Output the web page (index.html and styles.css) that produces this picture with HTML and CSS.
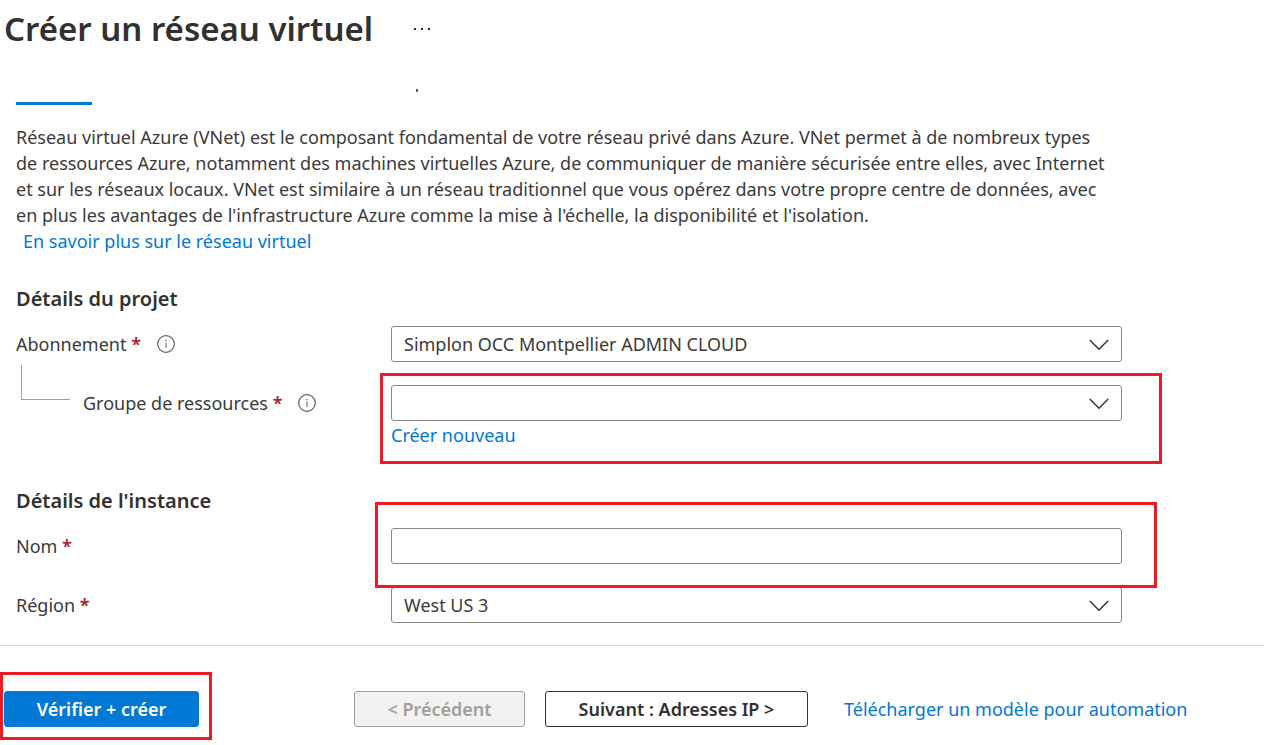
FILE: index.html
```html
<!DOCTYPE html>
<html lang="fr">
<head>
<meta charset="utf-8">
<meta name="viewport" content="width=device-width, initial-scale=1">
<title>Créer un réseau virtuel</title>
<link rel="stylesheet" href="styles.css">
</head>
<body>
<header class="header">
  <h1 class="title">Créer un réseau virtuel</h1>
  <button class="more" type="button" aria-label="Plus d'options">
    <svg width="18" height="4" viewBox="0 0 18 4" aria-hidden="true"><path d="M1 1h2v2H1zM8 1h2v2H8zM15 1h2v2h-2z" fill="#323130"/></svg>
  </button>
</header>
<div class="tabs">
  <span class="tab-active"></span>
  <span class="tab-mark"></span>
</div>
<main class="content">
  <p class="intro">Réseau virtuel Azure (VNet) est le composant fondamental de votre réseau privé dans Azure. VNet permet à de nombreux types de ressources Azure, notamment des machines virtuelles Azure, de communiquer de manière sécurisée entre elles, avec Internet et sur les réseaux locaux. VNet est similaire à un réseau traditionnel que vous opérez dans votre propre centre de données, avec en plus les avantages de l'infrastructure Azure comme la mise à l'échelle, la disponibilité et l'isolation.</p>
  <a class="link learn" href="#">En savoir plus sur le réseau virtuel</a>

  <section class="section">
    <h2 class="heading">Détails du projet</h2>
    <div class="row">
      <div class="label-cell">
        <label for="subscription">Abonnement <span class="required">*</span></label>
        <svg class="info" width="18" height="18" viewBox="0 0 18 18" aria-hidden="true"><circle cx="9" cy="9" r="8.3" fill="none" stroke="#605e5c" stroke-width="1.2"/><path d="M8.4 5h1.2v1.3H8.4zM8.5 7.6h1v5.4h-1z" fill="#605e5c"/></svg>
      </div>
      <div class="field">
        <select id="subscription" class="control"><option>Simplon OCC Montpellier ADMIN CLOUD</option></select>
        <svg class="chevron" width="20" height="12" viewBox="0 0 20 12" aria-hidden="true"><path d="M.8 1 10 10.3 19.2 1" fill="none" stroke="#323130" stroke-width="1.4"/></svg>
      </div>
    </div>
    <div class="row">
      <div class="label-cell">
        <span class="branch"></span>
        <label for="group">Groupe de ressources <span class="required">*</span></label>
        <svg class="info" width="18" height="18" viewBox="0 0 18 18" aria-hidden="true"><circle cx="9" cy="9" r="8.3" fill="none" stroke="#605e5c" stroke-width="1.2"/><path d="M8.4 5h1.2v1.3H8.4zM8.5 7.6h1v5.4h-1z" fill="#605e5c"/></svg>
      </div>
      <div class="field">
        <select id="group" class="control"><option></option></select>
        <svg class="chevron" width="20" height="12" viewBox="0 0 20 12" aria-hidden="true"><path d="M.8 1 10 10.3 19.2 1" fill="none" stroke="#323130" stroke-width="1.4"/></svg>
        <a class="link create" href="#">Créer nouveau</a>
        <span class="highlight highlight-group"></span>
      </div>
    </div>
  </section>

  <section class="section section-instance">
    <h2 class="heading">Détails de l'instance</h2>
    <div class="row">
      <div class="label-cell">
        <label for="name">Nom <span class="required">*</span></label>
      </div>
      <div class="field">
        <input id="name" class="control" type="text">
        <span class="highlight highlight-name"></span>
      </div>
    </div>
    <div class="row">
      <div class="label-cell">
        <label for="region">Région <span class="required">*</span></label>
      </div>
      <div class="field">
        <select id="region" class="control"><option>West US 3</option></select>
        <svg class="chevron" width="20" height="12" viewBox="0 0 20 12" aria-hidden="true"><path d="M.8 1 10 10.3 19.2 1" fill="none" stroke="#323130" stroke-width="1.4"/></svg>
      </div>
    </div>
  </section>
</main>
<footer class="footer">
  <div class="primary-slot">
    <button class="button primary" type="button">Vérifier + créer</button>
    <span class="highlight highlight-submit"></span>
  </div>
  <button class="button previous" type="button" disabled>&lt; Précédent</button>
  <button class="button next" type="button">Suivant : Adresses IP &gt;</button>
  <a class="link download" href="#">Télécharger un modèle pour automation</a>
</footer>
</body>
</html>
```
FILE: styles.css
```css
* { box-sizing: border-box; }

body {
  margin: 0;
  background: #fff;
  color: #3b3a39;
  font-family: "Segoe UI", "Noto Sans", "Open Sans", sans-serif;
  font-size: 18px;
  line-height: 26px;
}

.header {
  display: flex;
  align-items: center;
  gap: 40px;
  height: 58px;
  padding-left: 4px;
}

.title {
  margin: 0;
  color: #323130;
  font-size: 33px;
  font-weight: 600;
  line-height: 48px;
}

.more {
  display: flex;
  padding: 0;
  border: 0;
  background: none;
}

.tabs {
  display: flex;
  align-items: flex-end;
  gap: 324px;
  height: 47px;
  padding-left: 16px;
}

.tab-active {
  width: 76px;
  height: 3px;
  background: #0078d4;
}

.tab-mark {
  width: 2px;
  height: 3px;
  margin-bottom: 13px;
  background: #605e5c;
}

.content {
  max-width: 1138px;
  padding: 19px 16px 0;
}

.intro {
  max-width: 1099px;
  margin: 0;
}

.link {
  color: #0078d4;
  text-decoration: none;
}

.learn { margin-left: 7px; }

.section { padding-top: 32px; }

.section-instance { padding-top: 40px; }

.heading {
  margin: 0 0 14px;
  color: #323130;
  font-size: 20px;
  font-weight: 600;
  line-height: 26px;
}

.row {
  display: grid;
  grid-template-columns: 375px 1fr;
  margin-bottom: 23px;
}

.row:last-child { margin-bottom: 0; }

.label-cell {
  display: flex;
  align-items: center;
  height: 36px;
}

.required {
  color: #a4262c;
  font-weight: 600;
}

.info { margin-left: 16px; }

.branch {
  width: 49px;
  height: 35px;
  margin: 0 13px 42px 5px;
  border: solid #a19f9d;
  border-width: 0 0 1px 1px;
}

.field { position: relative; }

.control {
  display: block;
  width: 100%;
  height: 36px;
  padding: 0 12px;
  border: 1px solid #8a8886;
  border-radius: 3px;
  background: #fff;
  color: inherit;
  font: inherit;
  appearance: none;
}

.chevron {
  position: absolute;
  top: 13px;
  right: 13px;
  pointer-events: none;
}

.create {
  display: block;
  width: max-content;
  padding-top: 1px;
}

.highlight {
  position: absolute;
  z-index: 1;
  border: 3px solid #ed1c24;
  pointer-events: none;
}

.highlight-group { inset: -12px -40px -16px -11px; }

.highlight-name { inset: -26px -35px -24px -16px; }

.highlight-submit { inset: -19px -13px -13px -4px; }

.footer {
  display: flex;
  align-items: center;
  margin-top: 22px;
  padding: 45px 4px 18px;
  border-top: 1px solid #d8d6d4;
}

.primary-slot {
  position: relative;
  margin-right: 155px;
}

.button {
  display: block;
  height: 36px;
  padding: 0;
  border: 1px solid #323130;
  border-radius: 3px;
  background: #fff;
  color: #323130;
  font: inherit;
  font-weight: 600;
}

.primary {
  width: 195px;
  border-color: #0078d4;
  background: #0078d4;
  color: #fff;
}

.previous {
  width: 171px;
  margin-right: 20px;
  border-color: #a19f9d;
  background: #f3f2f1;
  color: #a19f9d;
}

.next {
  width: 263px;
  margin-right: 36px;
}
```
